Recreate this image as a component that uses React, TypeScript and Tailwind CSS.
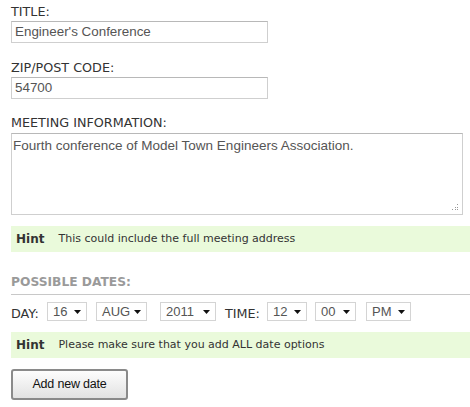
import React from "react";

const Sel = ({ value, w }: { value: string; w: string }) => (
  <div className={`flex items-center justify-between h-[19px] border border-[#d4d4d4] bg-white pl-[5px] pr-[5px] ${w}`}>
    <span className="text-[13px] leading-none text-[#555] font-['Liberation_Sans',sans-serif]">{value}</span>
    <svg width="7" height="4" viewBox="0 0 7 4"><path d="M0 0h7L3.5 4z" fill="#111" /></svg>
  </div>
);

const Hint = ({ text, cls }: { text: string; cls: string }) => (
  <div className={`flex items-center bg-[#eafadb] h-[26px] pl-[5px] font-['DejaVu_Sans',Verdana,sans-serif] text-[11px] ${cls}`}>
    <span className="font-bold text-[12px] text-[#333] mr-[14px]">Hint</span>
    <span className="text-[#333]">{text}</span>
  </div>
);

export default function App() {
  const label = "font-['DejaVu_Sans',Verdana,sans-serif] text-[12.75px] text-[#333] leading-[13px]";
  const input = "h-[22px] border border-[#cfcfcf] border-t-[#b8b8b8] bg-white px-[3px] flex items-center text-[13.4px] text-[#555] font-['Liberation_Sans',sans-serif]";
  return (
    <div className="w-[470px] h-[407px] bg-white pl-[11px] pt-[5px] overflow-hidden">
      <div className={label}>TITLE:</div>
      <div className={`${input} w-[257px] mt-[3px]`}>Engineer's Conference</div>
      <div className={`${label} mt-[18px]`}>ZIP/POST CODE:</div>
      <div className={`${input} w-[257px] mt-[3px]`}>54700</div>
      <div className={`${label} mt-[17px]`}>MEETING INFORMATION:</div>
      <div className="relative w-[452px] h-[82px] mt-[4px] border border-[#cfcfcf] border-t-[#b8b8b8] bg-white pl-[1px] pr-[2px] pt-[3px] text-[13.5px] text-[#555] font-['Liberation_Sans',sans-serif] leading-[17px]">
        Fourth conference of Model Town Engineers Association.
        <svg className="absolute right-[3px] bottom-[3px]" width="7" height="7" viewBox="0 0 7 7">
          <rect x="5" y="0" width="1" height="1" fill="#999" />
          <rect x="3" y="3" width="1" height="1" fill="#999" />
          <rect x="5" y="3" width="1" height="1" fill="#999" />
          <rect x="0" y="5" width="1" height="1" fill="#999" />
          <rect x="3" y="5" width="1" height="1" fill="#999" />
          <rect x="5" y="5" width="1" height="1" fill="#999" />
        </svg>
      </div>
      <Hint text="This could include the full meeting address" cls="mt-[11px]" />
      <div className="mt-[24px] font-['DejaVu_Sans',Verdana,sans-serif] font-bold text-[12.25px] text-[#9a9a9a] leading-[13px]">POSSIBLE DATES:</div>
      <div className="mt-[5px] h-px bg-[#c8c8c8]" />
      <div className="flex items-end h-[19px] mt-[7px] font-['DejaVu_Sans',Verdana,sans-serif] text-[12.75px] text-[#333]">
        <span className="w-[36px] leading-[13px] mb-[1px]">DAY:</span>
        <Sel value="16" w="w-[40px]" />
        <div className="w-[9px]" />
        <Sel value="AUG" w="w-[51px]" />
        <div className="w-[13px]" />
        <Sel value="2011" w="w-[56px]" />
        <span className="ml-[9px] w-[42px] leading-[13px] mb-[1px]">TIME:</span>
        <Sel value="12" w="w-[40px]" />
        <div className="w-[8px]" />
        <Sel value="00" w="w-[41px]" />
        <div className="w-[10px]" />
        <Sel value="PM" w="w-[45px]" />
      </div>
      <Hint text="Please make sure that you add ALL date options" cls="mt-[11px]" />
      <button className="mt-[11px] w-[117px] h-[31px] rounded-[3px] border-2 border-[#8a8a8a] bg-gradient-to-b from-[#fdfdfd] to-[#e2e2e2] text-[12.5px] text-[#111] font-['Liberation_Sans',sans-serif] flex items-center justify-center tracking-[-0.2px]">
        Add new date
      </button>
    </div>
  );
}
